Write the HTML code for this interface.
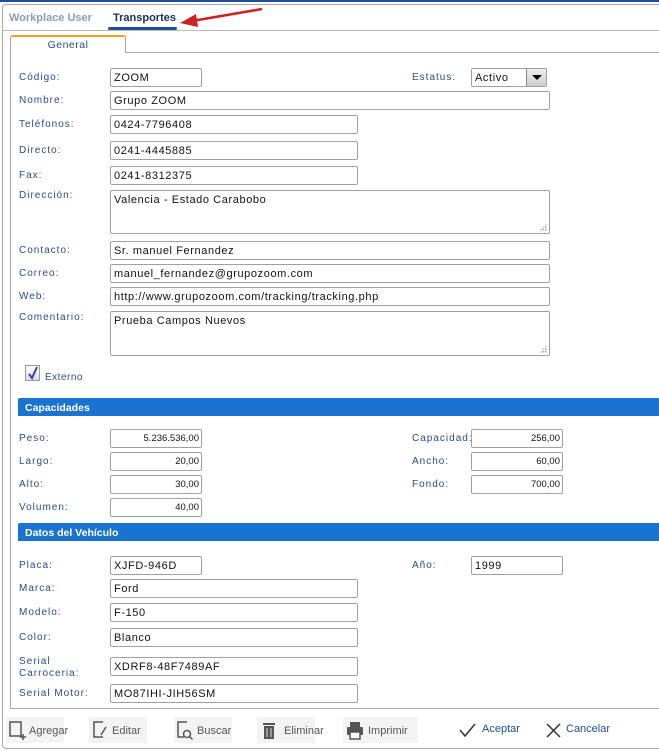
<!DOCTYPE html>
<html><head><meta charset="utf-8"><style>
*{margin:0;padding:0;box-sizing:border-box}
body{width:659px;height:751px;background:#fff;font-family:"Liberation Sans",sans-serif;position:relative;overflow:hidden}
.a{position:absolute}
.l{position:absolute;left:19px;font-size:10px;color:#2a4a9a;letter-spacing:1px}
.i{position:absolute;border:1px solid #a0a0a0;border-radius:2px;background:#fff;font-size:11px;color:#111;padding:3px 0 0 3px;letter-spacing:.6px;height:19px;white-space:nowrap}
.r{text-align:right;padding-right:2px;font-size:9.5px;letter-spacing:0}
.bar{position:absolute;left:18px;width:641px;height:18px;background:#1a73d0;color:#fff;font-weight:bold;font-size:10.5px;padding:4px 0 0 7px;border-radius:2px 0 0 0}
.btn{position:absolute;top:717px;height:26px;background:#f3f3f3;border-radius:2px;font-size:11px;color:#555;padding:8px 0 0 23px}
.grip{position:absolute;right:2px;bottom:2px;width:8px;height:8px;background:radial-gradient(circle,#999 0.7px,transparent 0.8px) 0 0/2.7px 2.7px;clip-path:polygon(100% 0,100% 100%,0 100%)}
</style></head><body>
<div class="a" style="left:0;top:0;width:659px;height:2px;background:#1d4f9a"></div>
<div class="a" style="left:2px;top:4px;width:670px;height:745px;border:1px solid #aaa;border-radius:4px"></div>
<div class="a" style="left:3px;top:30px;width:656px;height:1px;background:#bbb"></div>
<div class="a" style="left:9px;top:12px;font-size:11px;font-weight:bold;color:#8a9cc0">Workplace User</div>
<div class="a" style="left:113px;top:12px;font-size:11px;font-weight:bold;color:#1d3060">Transportes</div>
<div class="a" style="left:108px;top:27px;width:69px;height:3px;background:#1d4f9a;border-radius:2px"></div>
<svg class="a" style="left:178px;top:4px" width="90" height="26"><line x1="84" y1="5" x2="14" y2="17" stroke="#c22" stroke-width="2.5"/><polygon points="2,19 18,10 20,23" fill="#c22"/></svg>
<div class="a" style="left:10px;top:52px;width:660px;height:657px;border:1px solid #aaa"></div>
<div class="a" style="left:10px;top:35px;width:116px;height:18px;border:1px solid #aaa;border-top:2px solid #f0a020;border-bottom:none;background:#fff;font-size:10.5px;color:#2a4a9a;text-align:center;padding-top:2px;letter-spacing:.5px;border-radius:3px 3px 0 0">General</div>

<div class="l" style="top:72px">Código:</div><div class="i" style="left:110px;top:68px;width:92px">ZOOM</div>
<div class="l" style="left:412px;top:72px">Estatus:</div>
<div class="i" style="left:471px;top:68px;width:76px;padding-left:3px">Activo<div class="a" style="right:0;top:0;width:20px;height:17px;background:linear-gradient(#eee,#ccc);border-left:1px solid #888"><div class="a" style="left:5px;top:6px;border:5px solid transparent;border-top:5px solid #000;border-bottom:0"></div></div></div>
<div class="l" style="top:95px">Nombre:</div><div class="i" style="left:110px;top:91px;width:440px">Grupo ZOOM</div>
<div class="l" style="top:119px">Teléfonos:</div><div class="i" style="left:110px;top:115px;width:248px">0424-7796408</div>
<div class="l" style="top:145px">Directo:</div><div class="i" style="left:110px;top:141px;width:248px">0241-4445885</div>
<div class="l" style="top:170px">Fax:</div><div class="i" style="left:110px;top:166px;width:248px">0241-8312375</div>
<div class="l" style="top:190px">Dirección:</div><div class="i" style="left:110px;top:190px;width:440px;height:44px;padding-top:3px">Valencia - Estado Carabobo<div class="grip"></div></div>
<div class="l" style="top:245px">Contacto:</div><div class="i" style="left:110px;top:241px;width:440px">Sr. manuel Fernandez</div>
<div class="l" style="top:268px">Correo:</div><div class="i" style="left:110px;top:264px;width:440px">manuel_fernandez@grupozoom.com</div>
<div class="l" style="top:291px">Web:</div><div class="i" style="left:110px;top:287px;width:440px">http://www.grupozoom.com/tracking/tracking.php</div>
<div class="l" style="top:312px">Comentario:</div><div class="i" style="left:110px;top:311px;width:440px;height:45px;padding-top:3px">Prueba Campos Nuevos<div class="grip"></div></div>

<div class="a" style="left:25px;top:365px;width:15px;height:16px;border:1px solid #999;background:linear-gradient(#fff,#dde)"><svg width="13" height="14"><path d="M3 8 L6 12 L11 1" stroke="#2a4a9a" stroke-width="2" fill="none"/></svg></div>
<div class="l" style="left:45px;top:372px;letter-spacing:.5px">Externo</div>

<div class="bar" style="top:398px">Capacidades</div>
<div class="l" style="top:433px">Peso:</div><div class="i r" style="left:110px;top:429px;width:92px">5.236.536,00</div>
<div class="l" style="top:456px">Largo:</div><div class="i r" style="left:110px;top:452px;width:92px">20,00</div>
<div class="l" style="top:479px">Alto:</div><div class="i r" style="left:110px;top:475px;width:92px">30,00</div>
<div class="l" style="top:502px">Volumen:</div><div class="i r" style="left:110px;top:498px;width:92px">40,00</div>
<div class="l" style="left:412px;top:433px">Capacidad:</div><div class="i r" style="left:471px;top:429px;width:92px">256,00</div>
<div class="l" style="left:412px;top:456px">Ancho:</div><div class="i r" style="left:471px;top:452px;width:92px">60,00</div>
<div class="l" style="left:412px;top:479px">Fondo:</div><div class="i r" style="left:471px;top:475px;width:92px">700,00</div>

<div class="bar" style="top:523px">Datos del Vehículo</div>
<div class="l" style="top:560px">Placa:</div><div class="i" style="left:110px;top:556px;width:92px">XJFD-946D</div>
<div class="l" style="left:412px;top:560px">Año:</div><div class="i" style="left:471px;top:556px;width:92px">1999</div>
<div class="l" style="top:583px">Marca:</div><div class="i" style="left:110px;top:579px;width:248px">Ford</div>
<div class="l" style="top:607px">Modelo:</div><div class="i" style="left:110px;top:603px;width:248px">F-150</div>
<div class="l" style="top:632px">Color:</div><div class="i" style="left:110px;top:628px;width:248px">Blanco</div>
<div class="l" style="top:656px;line-height:12px">Serial<br>Carroceria:</div><div class="i" style="left:110px;top:657px;width:248px">XDRF8-48F7489AF</div>
<div class="l" style="top:688px">Serial Motor:</div><div class="i" style="left:110px;top:684px;width:248px">MO87IHI-JIH56SM</div>

<div class="btn" style="left:6px;width:58px">Agregar<svg class="a" style="left:3px;top:4px" width="18" height="20"><rect x="1" y="1" width="11" height="14" fill="none" stroke="#555" stroke-width="1.5"/><path d="M14 13v6M11 16h6" stroke="#555" stroke-width="1.5"/></svg></div>
<div class="btn" style="left:89px;width:58px">Editar<svg class="a" style="left:3px;top:4px" width="18" height="20"><path d="M11 1H2v15h9M14 6l-5 8" fill="none" stroke="#555" stroke-width="1.5"/></svg></div>
<div class="btn" style="left:174px;width:58px">Buscar<svg class="a" style="left:3px;top:4px" width="18" height="20"><path d="M10 1H1v15h6" fill="none" stroke="#555" stroke-width="1.5"/><circle cx="10" cy="13" r="3.5" fill="none" stroke="#555" stroke-width="1.5"/><path d="M12.5 15.5l3 3" stroke="#555" stroke-width="1.5"/></svg></div>
<div class="btn" style="left:257px;width:58px;padding-left:27px">Eliminar<svg class="a" style="left:5px;top:4px" width="16" height="20"><rect x="1" y="2" width="12" height="2" fill="#555"/><rect x="2" y="5" width="10" height="13" fill="#555"/><path d="M5 7v9M9 7v9" stroke="#ddd"/></svg></div>
<div class="btn" style="left:343px;width:75px;padding-left:25px">Imprimir<svg class="a" style="left:3px;top:4px" width="18" height="20"><rect x="4" y="1" width="10" height="5" fill="#555"/><rect x="1" y="6" width="16" height="8" rx="1" fill="#555"/><rect x="4" y="11" width="10" height="7" fill="#fff" stroke="#555" stroke-width="1.5"/></svg></div>
<div class="a" style="left:459px;top:723px;font-size:11px;color:#1d4f9a;padding-left:23px">Aceptar<svg class="a" style="left:0;top:0" width="18" height="14"><path d="M1 7l5 6L16 1" fill="none" stroke="#333" stroke-width="1.5"/></svg></div>
<div class="a" style="left:546px;top:723px;font-size:11px;color:#1d4f9a;padding-left:20px">Cancelar<svg class="a" style="left:0;top:0" width="16" height="15"><path d="M1 1l13 13M14 1L1 14" stroke="#333" stroke-width="1.5"/></svg></div>
</body></html>
